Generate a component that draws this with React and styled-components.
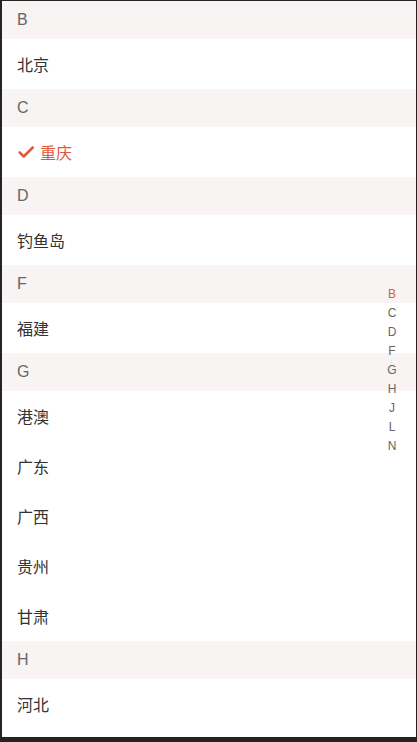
import React from "react";
import styled, { createGlobalStyle } from "styled-components";

const Global = createGlobalStyle`
  html, body { margin: 0; padding: 0; background: #232325; }
  body { font-family: "Liberation Sans", "Noto Sans CJK SC", sans-serif; }
`;

const Frame = styled.div`
  height: 742px;
  box-sizing: border-box;
  padding: 1px 1px 5px 2px;
  overflow: hidden;
`;

const Panel = styled.div`
  position: relative;
  height: 100%;
  background: #fff;
  overflow: hidden;
`;

const List = styled.div`
  display: flex;
  flex-direction: column;
`;

const Header = styled.div`
  height: 38px;
  display: flex;
  align-items: center;
  padding-left: 15px;
  background: #f7f4f3;
  color: #666;
  font-size: 16px;
`;

const Item = styled.div`
  height: 50px;
  box-sizing: border-box;
  padding-bottom: 1px;
  flex-shrink: 0;
  display: flex;
  align-items: center;
  gap: 5px;
  padding-left: 15px;
  font-size: 16px;
  color: ${(p) => (p.$active ? "#e0583a" : "#333")};
`;

const Index = styled.div`
  position: absolute;
  right: 14px;
  top: calc(50% + 1px);
  transform: translateY(-50%);
  display: flex;
  flex-direction: column;
  align-items: center;
  width: 20px;
`;

const IndexLetter = styled.div`
  height: 19px;
  line-height: 19px;
  font-size: 12px;
  color: ${(p) => (p.$active ? "#e0583a" : "#666")};
`;

const CheckIcon = () => (
  <svg width="18" height="18" viewBox="0 0 24 24" fill="none" stroke="#e0583a" strokeWidth="3.4" strokeLinecap="round" strokeLinejoin="round">
    <path d="M3.5 12.5l5.5 5.5L21 6" />
  </svg>
);

const groups = [
  ["B", ["北京"]],
  ["C", ["重庆"]],
  ["D", ["钓鱼岛"]],
  ["F", ["福建"]],
  ["G", ["港澳", "广东", "广西", "贵州", "甘肃"]],
  ["H", ["河北"]],
];

const letters = ["B", "C", "D", "F", "G", "H", "J", "L", "N"];

export default function App() {
  return (
    <>
      <Global />
      <Frame>
        <Panel>
          <List>
            {groups.map(([letter, items]) => (
              <React.Fragment key={letter}>
                <Header>{letter}</Header>
                {items.map((name) => {
                  const active = name === "重庆";
                  return (
                    <Item key={name} $active={active}>
                      {active && <CheckIcon />}
                      {name}
                    </Item>
                  );
                })}
              </React.Fragment>
            ))}
          </List>
          <Index>
            {letters.map((l) => (
              <IndexLetter key={l} $active={l === "B"}>{l}</IndexLetter>
            ))}
          </Index>
        </Panel>
      </Frame>
    </>
  );
}
